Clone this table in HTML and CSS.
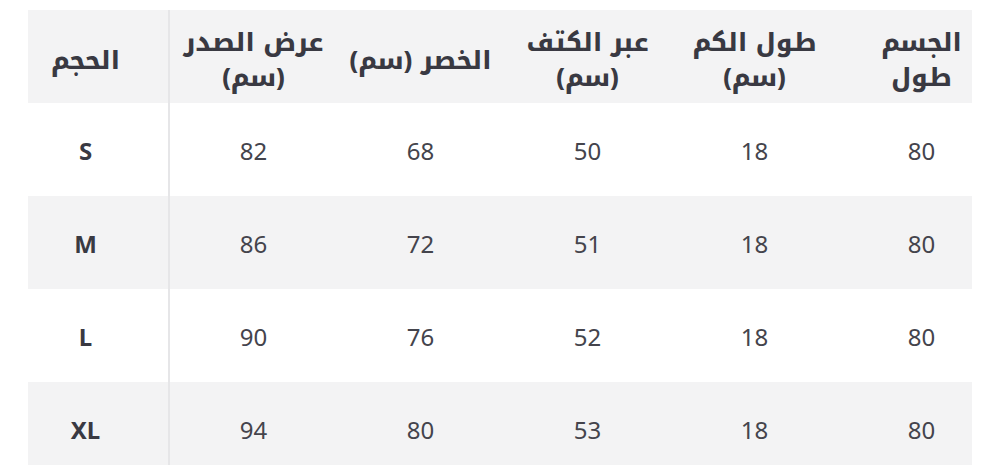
FILE: index.html
```html
<!DOCTYPE html>
<html lang="ar">
<head>
<meta charset="utf-8">
<title>جدول المقاسات</title>
<link rel="stylesheet" href="styles.css">
</head>
<body>
<div class="wrap">
  <div class="table">
    <div class="row head">
      <div class="cell first"><span class="ar">الحجم</span></div>
      <div class="cell"><span class="ar">عرض الصدر<br>(سم)</span></div>
      <div class="cell"><span class="ar">الخصر (سم)</span></div>
      <div class="cell"><span class="ar">عبر الكتف<br>(سم)</span></div>
      <div class="cell"><span class="ar">طول الكم<br>(سم)</span></div>
      <div class="cell"><span class="ar">الجسم<br>طول</span></div>
    </div>
    <div class="row">
      <div class="cell first size">S</div>
      <div class="cell">82</div>
      <div class="cell">68</div>
      <div class="cell">50</div>
      <div class="cell">18</div>
      <div class="cell">80</div>
    </div>
    <div class="row alt">
      <div class="cell first size">M</div>
      <div class="cell">86</div>
      <div class="cell">72</div>
      <div class="cell">51</div>
      <div class="cell">18</div>
      <div class="cell">80</div>
    </div>
    <div class="row">
      <div class="cell first size">L</div>
      <div class="cell">90</div>
      <div class="cell">76</div>
      <div class="cell">52</div>
      <div class="cell">18</div>
      <div class="cell">80</div>
    </div>
    <div class="row alt">
      <div class="cell first size">XL</div>
      <div class="cell">94</div>
      <div class="cell">80</div>
      <div class="cell">53</div>
      <div class="cell">18</div>
      <div class="cell">80</div>
    </div>
  </div>
</div>
</body>
</html>
```

FILE: styles.css
```css
html, body {
  margin: 0;
  padding: 0;
  background: #ffffff;
}

body {
  font-family: "Noto Sans", "Open Sans", sans-serif;
  color: #44444c;
}

.wrap {
  margin: 10px 0 0 28px;
  width: 944px;
  overflow: hidden;
}

.table {
  margin-left: -25px;
  width: 1002px;
}

.row {
  display: grid;
  grid-template-columns: repeat(6, 167px);
  height: 93px;
  background: #ffffff;
}

.row.head,
.row.alt {
  background: #f3f3f4;
}

.cell {
  display: flex;
  align-items: center;
  justify-content: center;
  text-align: center;
  font-size: 24px;
  line-height: 32px;
  padding-top: 3px;
}

.row.head .cell {
  padding-top: 7px;
}

.cell.first {
  border-right: 2px solid #e6e6e8;
}

.size {
  font-weight: 700;
  color: #393942;
}

.ar {
  direction: rtl;
  font-family: "Noto Kufi Arabic", "Noto Sans Arabic", "DejaVu Sans", sans-serif;
  font-weight: 800;
  font-size: 25px;
  line-height: 35px;
  color: #393942;
}
```
